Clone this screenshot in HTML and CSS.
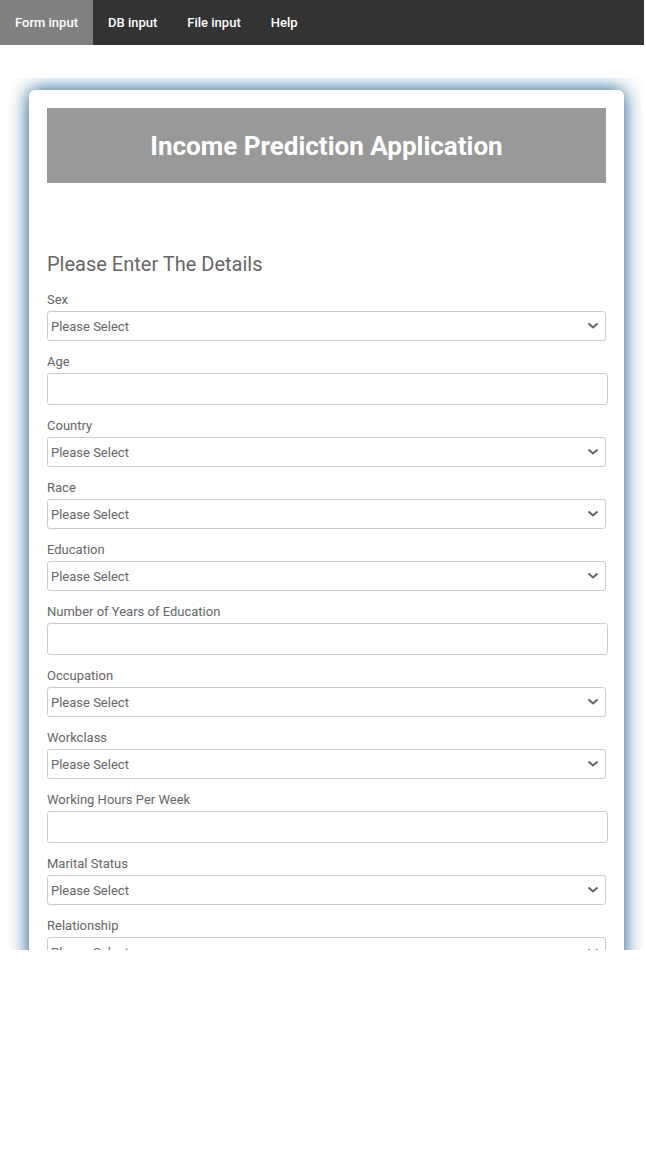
FILE: index.html
```html
<!DOCTYPE html>
<html lang="en">
<head>
<meta charset="utf-8">
<meta name="viewport" content="width=device-width, initial-scale=1">
<title>Income Prediction Application</title>
<link rel="stylesheet" href="styles.css">
</head>
<body>
<div class="page">
  <nav class="navbar">
    <a class="nav-link active" href="#form">Form input</a>
    <a class="nav-link" href="#db">DB input</a>
    <a class="nav-link" href="#file">File input</a>
    <a class="nav-link" href="#help">Help</a>
  </nav>
  <main class="content">
    <form class="card" id="form">
      <header class="banner"><h1 class="banner-title">Income Prediction Application</h1></header>
      <h2 class="form-title">Please Enter The Details</h2>
      <div class="fields">
        <div class="field"><label class="label" for="sex">Sex</label><select class="select" id="sex"><option>Please Select</option></select></div>
        <div class="field"><label class="label" for="age">Age</label><input class="input" type="text" id="age"></div>
        <div class="field"><label class="label" for="country">Country</label><select class="select" id="country"><option>Please Select</option></select></div>
        <div class="field"><label class="label" for="race">Race</label><select class="select" id="race"><option>Please Select</option></select></div>
        <div class="field"><label class="label" for="education">Education</label><select class="select" id="education"><option>Please Select</option></select></div>
        <div class="field"><label class="label" for="years">Number of Years of Education</label><input class="input" type="text" id="years"></div>
        <div class="field"><label class="label" for="occupation">Occupation</label><select class="select" id="occupation"><option>Please Select</option></select></div>
        <div class="field"><label class="label" for="workclass">Workclass</label><select class="select" id="workclass"><option>Please Select</option></select></div>
        <div class="field"><label class="label" for="hours">Working Hours Per Week</label><input class="input" type="text" id="hours"></div>
        <div class="field"><label class="label" for="marital">Marital Status</label><select class="select" id="marital"><option>Please Select</option></select></div>
        <div class="field"><label class="label" for="relationship">Relationship</label><select class="select" id="relationship"><option>Please Select</option></select></div>
      </div>
    </form>
  </main>
</div>
</body>
</html>
```
FILE: styles.css
```css
body {
  margin: 0;
  background: #fff;
  color: #666;
  font-family: Roboto, Arial, sans-serif;
  font-size: 13px;
}

.page {
  box-sizing: border-box;
  display: flex;
  flex-direction: column;
  height: 100vh;
  padding: 0 2px 202px 0;
}

.navbar {
  display: flex;
  flex: none;
  margin-bottom: 33px;
  background: #333;
}

.nav-link {
  padding: 12px 15px;
  color: #fff;
  font-weight: 500;
  line-height: 21px;
  text-decoration: none;
}

.nav-link.active {
  background: #808080;
}

.content {
  flex: 1;
  min-height: 0;
  overflow: hidden;
  padding: 12px 20px 0 29px;
}

.card {
  padding: 18px;
  border-radius: 6px;
  background: #fff;
  box-shadow: 0 0 20px 0 #095484;
}

.banner {
  padding: 20px 20px 18px;
  background: #999;
}

.banner-title {
  margin: 0;
  color: #fff;
  font-size: 26px;
  font-weight: 700;
  line-height: 37px;
  text-align: center;
}

.form-title {
  margin: 66px 0 10px;
  font-size: 20px;
  font-weight: 400;
  line-height: 30px;
}

.fields {
  display: flex;
  flex-direction: column;
  gap: 10px;
}

.field {
  display: flex;
  flex-direction: column;
}

.label {
  line-height: 22px;
}

.select,
.input {
  box-sizing: border-box;
  border: 1px solid #ccc;
  border-radius: 3px;
  background: #fff;
  color: #666;
  font: inherit;
}

.select {
  appearance: none;
  width: 100%;
  height: 30px;
  padding: 0 24px 0 3px;
  background: #fff url("data:image/svg+xml,%3Csvg xmlns='http://www.w3.org/2000/svg' width='12' height='8' viewBox='0 0 12 8'%3E%3Cpath d='M1.5 1.5 L6 5.5 L10.5 1.5' fill='none' stroke='%23666' stroke-width='2'/%3E%3C/svg%3E") no-repeat right 6px center;
}

.input {
  width: calc(100% + 2px);
  height: 32px;
  padding: 5px;
}
```
